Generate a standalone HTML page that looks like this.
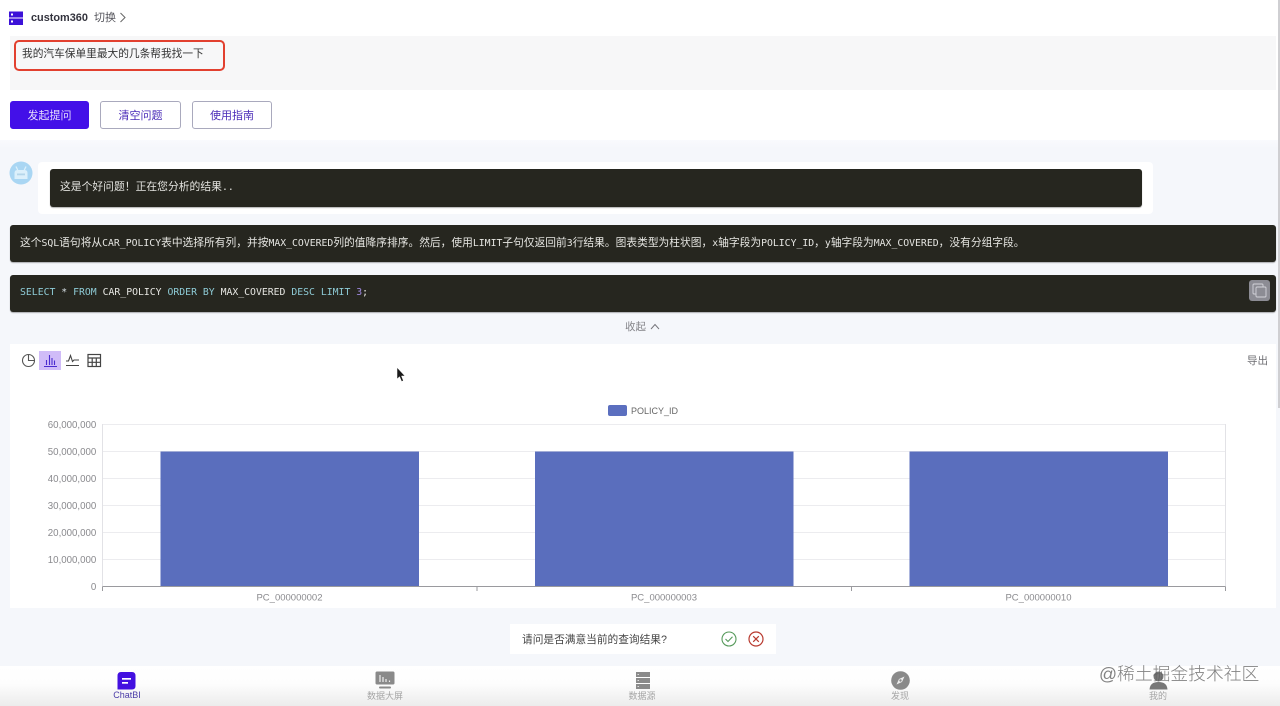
<!DOCTYPE html>
<html lang="zh">
<head>
<meta charset="utf-8">
<title>ChatBI</title>
<style>
*{box-sizing:border-box}
html,body{margin:0;padding:0;width:1280px;height:706px;overflow:hidden}
body{position:relative;background:#f5f7fb;font-family:"Liberation Sans","Noto Sans CJK SC",sans-serif;color:#333}
.a{position:absolute}
.t{position:absolute;white-space:nowrap;line-height:1}
.btn{position:absolute;top:101px;height:28px;width:80px;border-radius:3px;font-size:11px;line-height:28px;text-align:center;color:#4a2bb8;background:#fff;border:1px solid #a9a9bd}
.dark{position:absolute;background:#26261f;border-radius:3px;color:#e8e8e4;box-shadow:0 1px 1px rgba(0,0,0,.3)}
.mono{font-family:"DejaVu Sans Mono","Noto Sans CJK SC",monospace}
.ex{font-family:"Liberation Sans","Noto Sans CJK SC",sans-serif;font-size:10.740px}
.ex b{font-family:"DejaVu Sans Mono",monospace;font-weight:400;font-size:9.800px}
.nav{position:absolute;font-size:9px;line-height:1;color:#a5a5a5;text-align:center;white-space:nowrap}
</style>
</head>
<body>
<!-- top white -->
<div class="a" style="left:0;top:0;width:1280px;height:140px;background:#fff"></div>
<div class="a" style="left:0;top:140px;width:1280px;height:8px;background:linear-gradient(#f9fafd,#f5f7fb)"></div>
<!-- scrollbar -->
<div class="a" style="left:1278px;top:0;width:2px;height:408px;background:#cfcfd2"></div>

<!-- logo -->
<svg class="a" style="left:9px;top:10.500px" width="15" height="15" viewBox="0 0 15 15">
<rect x="0" y="0.500" width="14" height="6" fill="#3c12d8"/>
<rect x="0" y="7.500" width="14" height="6.500" fill="#3c12d8"/>
<rect x="2" y="2.500" width="2" height="2" fill="#fff"/>
<rect x="2" y="9.500" width="2" height="2" fill="#fff"/>
</svg>
<div class="t" style="left:31px;top:13px;font-size:10.900px;font-weight:700;color:#33333d">custom360</div>
<div class="t" style="left:94px;top:13px;font-size:11px;color:#55555c">切换</div>
<svg class="a" style="left:119px;top:12px" width="8" height="11" viewBox="0 0 8 11"><path d="M1.500 1 L6 5.500 L1.500 10" fill="none" stroke="#666" stroke-width="1"/></svg>

<!-- input -->
<div class="a" style="left:10px;top:36px;width:1266px;height:54px;background:#f7f7f8"></div>
<div class="a" style="left:14px;top:40px;width:211px;height:31px;border:2.500px solid #e2402f;border-radius:5px"></div>
<div class="t" style="left:22px;top:48.500px;font-size:10.700px;color:#333">我的汽车保单里最大的几条帮我找一下</div>

<!-- buttons -->
<div class="btn" style="left:10px;width:79px;background:#4310e8;border-color:#4310e8;color:#e6defc">发起提问</div>
<div class="btn" style="left:100px;width:81px">清空问题</div>
<div class="btn" style="left:192px;width:80px">使用指南</div>

<!-- avatar -->
<svg class="a" style="left:9px;top:161px" width="24" height="24" viewBox="0 0 24 24">
<circle cx="12" cy="12" r="11.500" fill="#a9d6f3"/>
<path d="M5.500 18 V12 Q5.500 9 8.500 9 H15.500 Q18.500 9 18.500 12 V18 Z" fill="#dcf0fb"/>
<path d="M7 5.500 L8.700 9 M17 5.500 L15.300 9" stroke="#dcf0fb" stroke-width="1.300" fill="none"/>
<rect x="8" y="12.500" width="8" height="1.800" fill="#b5d6ea"/>
</svg>

<!-- answer 1 -->
<div class="a" style="left:38px;top:162px;width:1115px;height:52px;background:#fff;border-radius:4px"></div>
<div class="dark" style="left:50px;top:169px;width:1092px;height:38px"></div>
<div class="t" style="left:60px;top:182px;font-size:10.800px;color:#e4e4e0">这是个好问题！正在您分析的结果<span class="mono" style="font-size:9.800px">..</span></div>

<!-- explanation -->
<div class="dark" style="left:10px;top:225px;width:1266px;height:37px"></div>
<div class="t ex" style="left:20px;top:238px;color:#e6e6e2">这个<b>SQL</b>语句将从<b>CAR_POLICY</b>表中选择所有列，并按<b>MAX_COVERED</b>列的值降序排序。然后，使用<b>LIMIT</b>子句仅返回前<b>3</b>行结果。图表类型为柱状图，<b>x</b>轴字段为<b>POLICY_ID</b>，<b>y</b>轴字段为<b>MAX_COVERED</b>，没有分组字段。</div>

<!-- sql -->
<div class="dark" style="left:10px;top:274.500px;width:1266px;height:37px"></div>
<div class="t mono" style="left:20px;top:288px;font-size:9.800px;color:#e6e6e2"><span style="color:#8ecbd6">SELECT</span> <span style="color:#d6dfe4">*</span> <span style="color:#8ecbd6">FROM</span> CAR_POLICY <span style="color:#8ecbd6">ORDER BY</span> MAX_COVERED <span style="color:#8ecbd6">DESC LIMIT</span> <span style="color:#a08ae0">3</span>;</div>
<div class="a" style="left:1249px;top:280px;width:21px;height:21px;background:#8c8c94;border-radius:3px"></div>
<svg class="a" style="left:1252px;top:283px" width="15" height="15" viewBox="0 0 15 15" fill="none" stroke="#d4d4da" stroke-width=".9">
<path d="M3.500 11 H2 Q1 11 1 10 V2 Q1 1 2 1 H10 Q11 1 11 2 V3.500"/>
<rect x="4" y="4" width="10" height="10" rx="1"/>
</svg>

<!-- collapse -->
<div class="t" style="left:625px;top:321.500px;font-size:10.500px;color:#85858a">收起</div>
<svg class="a" style="left:650px;top:323px" width="10" height="7" viewBox="0 0 10 7"><path d="M1 6 L5 1.500 L9 6" fill="none" stroke="#77777d" stroke-width="1"/></svg>

<!-- chart panel -->
<div class="a" style="left:10px;top:344px;width:1266px;height:264px;background:#fff"></div>

<!-- toolbar -->
<svg class="a" style="left:21px;top:353px" width="15" height="15" viewBox="0 0 15 15" fill="none" stroke="#555" stroke-width="1.100">
<circle cx="7.500" cy="7.500" r="6"/>
<path d="M7.500 1.500 V7.500 H13.500"/>
</svg>
<div class="a" style="left:39px;top:351px;width:22px;height:19px;background:#d0bcf8"></div>
<svg class="a" style="left:43px;top:353px" width="15" height="15" viewBox="0 0 15 15" fill="none" stroke="#4a2bd0" stroke-width="1.100">
<path d="M1 13.500 H14 M3.500 12 V7 M6.500 12 V2 M9 12 V5 M11.500 12 V7.500"/>
</svg>
<svg class="a" style="left:65px;top:353px" width="15" height="15" viewBox="0 0 15 15" fill="none" stroke="#444" stroke-width="1.100">
<path d="M1 8 H3.500 L5.500 2.500 L7.500 8.500 L9 7 H14 M1 12.500 H14"/>
</svg>
<svg class="a" style="left:87px;top:353px" width="15" height="15" viewBox="0 0 15 15" fill="none" stroke="#444" stroke-width="1.200">
<rect x="1" y="1.500" width="12.500" height="12"/>
<path d="M1 5 H13.500 M1 9.300 H13.500 M5.200 5 V13.500 M9.300 5 V13.500"/>
</svg>
<div class="t" style="left:1247px;top:356px;font-size:10.500px;color:#6d6d72">导出</div>

<!-- cursor -->
<svg class="a" style="left:396px;top:367px" width="10" height="16" viewBox="0 0 10 16"><path d="M1 0.500 V12 L3.600 9.700 L5.600 14.500 L7.400 13.700 L5.500 9 H9 Z" fill="#1a1a1a" stroke="#fff" stroke-width=".5"/></svg>

<!-- chart -->
<svg class="a" style="left:0;top:400px" width="1280" height="210" viewBox="0 400 1280 210">
<rect x="608" y="405" width="19" height="11" rx="2" fill="#5b6fbf"/>
<text x="631" y="414" font-family="Liberation Sans, sans-serif" font-size="9" fill="#666">POLICY_ID</text>
<g stroke="#ececef" stroke-width="1">
<path d="M103 424.500 H1225.500 M103 451.500 H1225.500 M103 478.500 H1225.500 M103 505.500 H1225.500 M103 532.500 H1225.500 M103 559.500 H1225.500"/>
<path d="M102.500 424 V586 M1225.500 424 V586" stroke="#e2e2e6"/>
</g>
<rect x="160.500" y="451.500" width="258.500" height="135" fill="#5a6ebd"/>
<rect x="535" y="451.500" width="258.500" height="135" fill="#5a6ebd"/>
<rect x="909.500" y="451.500" width="258.500" height="135" fill="#5a6ebd"/>
<path d="M102.500 586.500 H1225.500 M102.500 586.500 V591 M477 586.500 V591 M851.500 586.500 V591 M1225.500 586.500 V591" stroke="#9a9a9e" stroke-width="1" fill="none"/>
<g font-family="Liberation Sans, sans-serif" font-size="9.700" fill="#8a8a8e" text-anchor="end">
<text x="96.300" y="428">60,000,000</text>
<text x="96.300" y="455">50,000,000</text>
<text x="96.300" y="482">40,000,000</text>
<text x="96.300" y="509">30,000,000</text>
<text x="96.300" y="536">20,000,000</text>
<text x="96.300" y="563">10,000,000</text>
<text x="96.300" y="590">0</text>
</g>
<g font-family="Liberation Sans, sans-serif" font-size="9.500" fill="#8a8a8e" text-anchor="middle">
<text x="289.500" y="600.500">PC_000000002</text>
<text x="664" y="600.500">PC_000000003</text>
<text x="1038.500" y="600.500">PC_000000010</text>
</g>
</svg>

<!-- feedback -->
<div class="a" style="left:510px;top:624px;width:266px;height:30px;background:#fff"></div>
<div class="t" style="left:522px;top:635px;font-size:10.700px;color:#444">请问是否满意当前的查询结果?</div>
<svg class="a" style="left:721px;top:631px" width="16" height="16" viewBox="0 0 16 16" fill="none"><circle cx="8" cy="8" r="7" stroke="#55995a" stroke-width="1.100"/><path d="M4.500 8 L7 10.500 L11.500 5.800" stroke="#55995a" stroke-width="1.100"/></svg>
<svg class="a" style="left:748px;top:631px" width="16" height="16" viewBox="0 0 16 16" fill="none"><circle cx="8" cy="8" r="7" stroke="#b8392e" stroke-width="1.200"/><path d="M5.200 5.200 L10.800 10.800 M10.800 5.200 L5.200 10.800" stroke="#b8392e" stroke-width="1.200"/></svg>

<!-- bottom nav -->
<div class="a" style="left:0;top:666px;width:1280px;height:40px;background:linear-gradient(#fff 0%,#fdfdfd 45%,#ececec 100%)"></div>
<svg class="a" style="left:117px;top:672px" width="19" height="18" viewBox="0 0 19 18">
<path d="M4 0 H15 Q18.500 0 18.500 4 V14 Q18.500 17.500 15 17.500 H0.500 V4 Q0.500 0 4 0 Z" fill="#4310e0"/>
<rect x="5" y="6" width="9" height="1.700" fill="#fff"/>
<rect x="5" y="10" width="6" height="1.700" fill="#fff"/>
</svg>
<div class="nav" style="left:107px;width:40px;top:691px;color:#4b3ca8">ChatBI</div>

<svg class="a" style="left:375px;top:671px" width="20" height="18" viewBox="0 0 20 18">
<rect x="0.500" y="0.500" width="19" height="13" rx="1.500" fill="#8a8a8a"/>
<rect x="4" y="15.500" width="12" height="2" rx="1" fill="#8a8a8a"/>
<path d="M5 4 V11 M8 6 V11 M11 8 V11 M14.500 9.500 V11" stroke="#eee" stroke-width="1.200"/>
</svg>
<div class="nav" style="left:355px;width:60px;top:692px">数据大屏</div>

<svg class="a" style="left:636px;top:672px" width="14" height="17" viewBox="0 0 14 17" fill="#8a8a8a">
<rect y="0" width="14" height="5"/><rect y="6" width="14" height="5"/><rect y="12" width="14" height="5"/>
<rect x="1.500" y="2" width="1.500" height="1" fill="#ddd"/><rect x="1.500" y="8" width="1.500" height="1" fill="#ddd"/><rect x="1.500" y="14" width="1.500" height="1" fill="#ddd"/>
</svg>
<div class="nav" style="left:612px;width:60px;top:692px">数据源</div>

<svg class="a" style="left:891px;top:671px" width="19" height="19" viewBox="0 0 19 19">
<circle cx="9.500" cy="9.500" r="9.300" fill="#8a8a8a"/>
<path d="M13.500 5.500 L11 11 L5.500 13.500 L8 8 Z" fill="#eee"/>
<circle cx="9.500" cy="9.500" r="1.200" fill="#8a8a8a"/>
</svg>
<div class="nav" style="left:870px;width:60px;top:692px">发现</div>

<svg class="a" style="left:1149px;top:671px" width="19" height="19" viewBox="0 0 19 19" fill="#777">
<circle cx="9.500" cy="5.500" r="5"/>
<path d="M0.500 18.500 Q1 11 9.500 11 Q18 11 18.500 18.500 Z"/>
</svg>
<div class="nav" style="left:1128px;width:60px;top:692px">我的</div>

<!-- watermark -->
<div class="t" style="left:1099px;top:666px;font-size:17.800px;color:rgba(95,95,95,.78);font-weight:300">@稀土掘金技术社区</div>
</body>
</html>
